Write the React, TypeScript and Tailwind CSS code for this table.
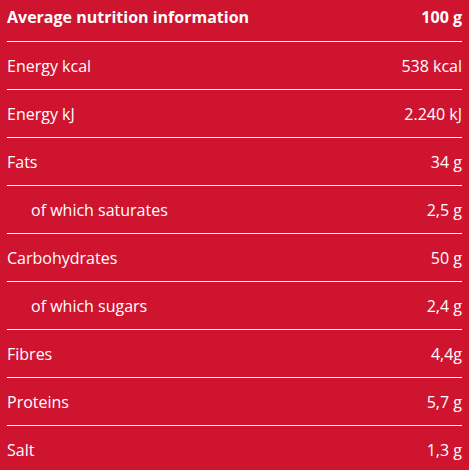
import React from "react";

const rows: { label: string; value: string; indent?: boolean }[] = [
  { label: "Energy kcal", value: "538 kcal" },
  { label: "Energy kJ", value: "2.240 kJ" },
  { label: "Fats", value: "34 g" },
  { label: "of which saturates", value: "2,5 g", indent: true },
  { label: "Carbohydrates", value: "50 g" },
  { label: "of which sugars", value: "2,4 g", indent: true },
  { label: "Fibres", value: "4,4g" },
  { label: "Proteins", value: "5,7 g" },
  { label: "Salt", value: "1,3 g" },
];

export default function App() {
  return (
    <div
      className="w-[469px] h-[470px] overflow-hidden bg-[#CF1430] text-white px-[7px]"
      style={{ fontFamily: '"Open Sans", sans-serif' }}
    >
      <div className="flex justify-between items-start h-[42px] pt-[5px] text-[16px] font-bold border-b border-white">
        <span>Average nutrition information</span>
        <span>100 g</span>
      </div>
      {rows.map((r, i) => (
        <div
          key={i}
          className={`flex justify-between items-center h-[48px] text-[16px] ${
            i < rows.length - 1 ? "border-b border-white" : ""
          }`}
        >
          <span className={r.indent ? "pl-[24px]" : ""}>{r.label}</span>
          <span>{r.value}</span>
        </div>
      ))}
    </div>
  );
}
